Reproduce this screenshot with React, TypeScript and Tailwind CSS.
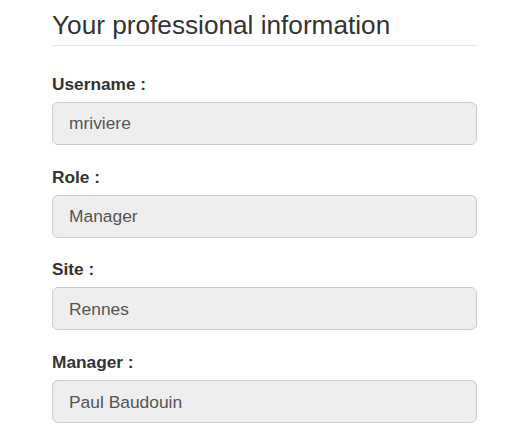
import React from "react";

const fields = [
  { label: "Username :", value: "mriviere" },
  { label: "Role :", value: "Manager" },
  { label: "Site :", value: "Rennes" },
  { label: "Manager :", value: "Paul Baudouin" },
];

export default function App() {
  return (
    <div
      className="w-[530px] h-[448px] bg-white overflow-hidden"
      style={{ fontFamily: '"Liberation Sans", Arial, sans-serif' }}
    >
      <div className="ml-[52px] w-[425px] pt-[11px]">
        <div className="pb-[6px] border-b border-[#e5e5e5]">
          <h3 className="text-[26.2px] leading-[28px] font-normal text-[#333333] m-0">
            Your professional information
          </h3>
        </div>
        <div className="mt-[26px] flex flex-col gap-[19.7px]">
          {fields.map((f) => (
            <div key={f.label} className="flex flex-col">
              <label className="text-[17.3px] leading-[24px] font-bold text-[#333333]">
                {f.label}
              </label>
              <div className="mt-[6px] h-[43px] flex items-center px-[16px] bg-[#eeeeee] border border-[#cccccc] rounded-[6px] text-[17.4px] text-[#555555]">
                {f.value}
              </div>
            </div>
          ))}
        </div>
      </div>
    </div>
  );
}
